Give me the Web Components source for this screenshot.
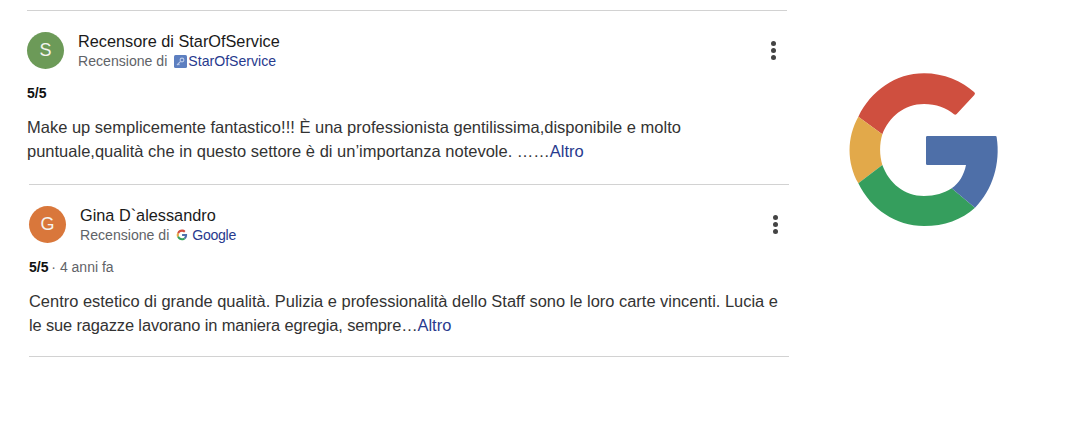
<!DOCTYPE html>
<html lang="it">
<head>
<meta charset="utf-8">
<title>Recensioni</title>
<style>
  html, body { margin: 0; background: #fff; }
  body { font-family: "Liberation Sans", Arial, sans-serif; color: #202124; }
</style>
</head>
<body>
<review-page>
  <review-list>
    <review-card name="Recensore di StarOfService" initial="S" color="#6c9a58" offset="27" height="173" text-size="16.5">
      <source-star slot="source-icon"></source-star>
      <span slot="source">StarOfService</span>
      <span slot="rating">5/5</span>
      Make up semplicemente fantastico!!! È una professionista gentilissima,disponibile e molto<br>puntuale,qualità che in questo settore è di un’importanza notevole. ……<review-link>Altro</review-link>
    </review-card>
    <review-card name="Gina D`alessandro" initial="G" color="#d9773b" offset="29" height="171" text-size="16.45" last>
      <source-google slot="source-icon"></source-google>
      <span slot="source" style="letter-spacing:-.3px">Google</span>
      <span slot="rating">5/5</span>
      <span slot="age"> · 4 anni fa</span>
      Centro estetico di grande qualità. Pulizia e professionalità dello Staff sono le loro carte vincenti. Lucia e<br><span style="letter-spacing:-.14px">le sue ragazze lavorano in maniera egregia, sempre…</span><review-link>Altro</review-link>
    </review-card>
  </review-list>
  <big-google></big-google>
</review-page>

<script>
class ReviewPage extends HTMLElement {
  constructor() {
    super();
    this.attachShadow({ mode: 'open' });
    this.shadowRoot.innerHTML = `
      <style>
        :host { display: flex; align-items: flex-start; width: 1087px; height: 435px; overflow: hidden; }
      </style>
      <slot></slot>
    `;
  }
}

class ReviewList extends HTMLElement {
  constructor() {
    super();
    this.attachShadow({ mode: 'open' });
    this.shadowRoot.innerHTML = `
      <style>
        :host { display: block; width: 789px; padding-top: 10px; flex: none; }
      </style>
      <slot></slot>
    `;
  }
}

class ReviewCard extends HTMLElement {
  constructor() {
    super();
    this.attachShadow({ mode: 'open' });
  }
  connectedCallback() {
    const offset = this.getAttribute('offset');
    const height = this.getAttribute('height');
    const bottomLine = this.hasAttribute('last') ? 'border-bottom: 1px solid #d2d2d2;' : '';
    this.shadowRoot.innerHTML = `
      <style>
        :host { display: block; margin-left: ${offset}px; width: 760px; height: ${height}px; border-top: 1px solid #d2d2d2; ${bottomLine} }
        .head { display: flex; align-items: flex-start; padding-top: 21px; }
        .avatar { width: 37px; height: 37px; border-radius: 50%; background: ${this.getAttribute('color')}; color: #f4f4f0;
          display: flex; align-items: center; justify-content: center; font-size: 18px; flex: none; margin-right: 14px; }
        .who { flex: 1; }
        .name { font-size: 16.3px; line-height: 19px; color: #1a1a1a; }
        .sub { font-size: 14.1px; line-height: 16px; color: #5f6368; margin-top: 2px; display: flex; align-items: center; }
        .src { color: #283a8e; display: flex; align-items: center; margin-left: 6px; }
        .dots { display: flex; flex-direction: column; gap: 2px; width: 5px; margin: 9px 11px 0 0; }
        .dots i { display: block; width: 5px; height: 5px; border-radius: 50%; background: #444; }
        .rating { margin-top: 16px; font-size: 14px; line-height: 16px; color: #5f6368; }
        ::slotted([slot=rating]) { font-weight: 700; color: #111; }
        ::slotted([slot=age]) { margin-left: -1px; }
        .text { margin-top: 15px; font-size: ${this.getAttribute('text-size')}px; line-height: 23.5px; color: #333; }
      </style>
      <div class="head">
        <div class="avatar">${this.getAttribute('initial')}</div>
        <div class="who">
          <div class="name">${this.getAttribute('name')}</div>
          <div class="sub">Recensione di<span class="src"><slot name="source-icon"></slot><slot name="source"></slot></span></div>
        </div>
        <div class="dots"><i></i><i></i><i></i></div>
      </div>
      <div class="rating"><slot name="rating"></slot><slot name="age"></slot></div>
      <div class="text"><slot></slot></div>
    `;
  }
}

class ReviewLink extends HTMLElement {
  constructor() {
    super();
    this.attachShadow({ mode: 'open' });
    // niente spazi attorno allo slot: il testo è inline
    this.shadowRoot.innerHTML = `<style>:host { display: inline; color: #283a8e; }</style><slot></slot>`;
  }
}

// logo piccolo di StarOfService
class SourceStar extends HTMLElement {
  constructor() {
    super();
    this.attachShadow({ mode: 'open' });
    this.shadowRoot.innerHTML = `
      <style>:host { display: block; width: 13px; height: 13px; margin: 0 1px 0 1px; }</style>
      <svg width="13" height="13" viewBox="0 0 13 13" style="display:block">
        <rect width="13" height="13" rx="1.5" fill="#5d7fc0"/>
        <circle cx="8" cy="5" r="1.9" fill="none" stroke="#bccbe8" stroke-width="1.1"/>
        <path d="M6.6 6.4 3 10M4.2 8.8l1.2 1.2" fill="none" stroke="#bccbe8" stroke-width="1.1"/>
      </svg>
    `;
  }
}

class SourceGoogle extends HTMLElement {
  constructor() {
    super();
    this.attachShadow({ mode: 'open' });
    this.shadowRoot.innerHTML = `
      <style>:host { display: block; width: 12px; height: 12px; margin: 0 4px 0 1px; }</style>
      <svg width="12" height="12" viewBox="0 0 510 510" style="display:block">
        ${gPaths('#d34f3f', '#e5aa45', '#35a05c', '#4f70ab')}
      </svg>
    `;
  }
}

// la G grande a destra, stessi tracciati del logo piccolo
class BigGoogle extends HTMLElement {
  constructor() {
    super();
    this.attachShadow({ mode: 'open' });
    this.shadowRoot.innerHTML = `
      <style>:host { display: block; width: 170px; height: 170px; margin: 65px 0 0 51px; flex: none; }</style>
      <svg width="170" height="170" viewBox="0 0 510 510" style="display:block">
        ${gPaths('#cf4f3f', '#e2a94a', '#359e5d', '#4e6fa8')}
      </svg>
    `;
  }
}

function gPaths(red, yellow, green, blue) {
  return `
    <path fill="${red}" d="M55 155C93 77 167 25 252 25C312 25 365 48 403 82Q407 86 403 90L350 147Q346 151 342 148C320 128 288 117 252 117C193 117 147 155 127 208Z"/>
    <path fill="${yellow}" d="M55 155L127 208C118 238 118 270 127 300L55 355C20 292 20 218 55 155Z"/>
    <path fill="${green}" d="M55 355L127 300C147 355 193 393 252 393C285 393 313 385 335 370L405 428C365 464 313 483 252 483C167 483 93 433 55 355Z"/>
    <path fill="${blue}" d="M262 213H466Q470 213 470 217C482 295 458 375 405 428L335 370C358 354 372 330 378 300H262Q258 300 258 296V217Q258 213 262 213Z"/>
  `;
}

customElements.define('review-page', ReviewPage);
customElements.define('review-list', ReviewList);
customElements.define('review-card', ReviewCard);
customElements.define('review-link', ReviewLink);
customElements.define('source-star', SourceStar);
customElements.define('source-google', SourceGoogle);
customElements.define('big-google', BigGoogle);
</script>
</body>
</html>
